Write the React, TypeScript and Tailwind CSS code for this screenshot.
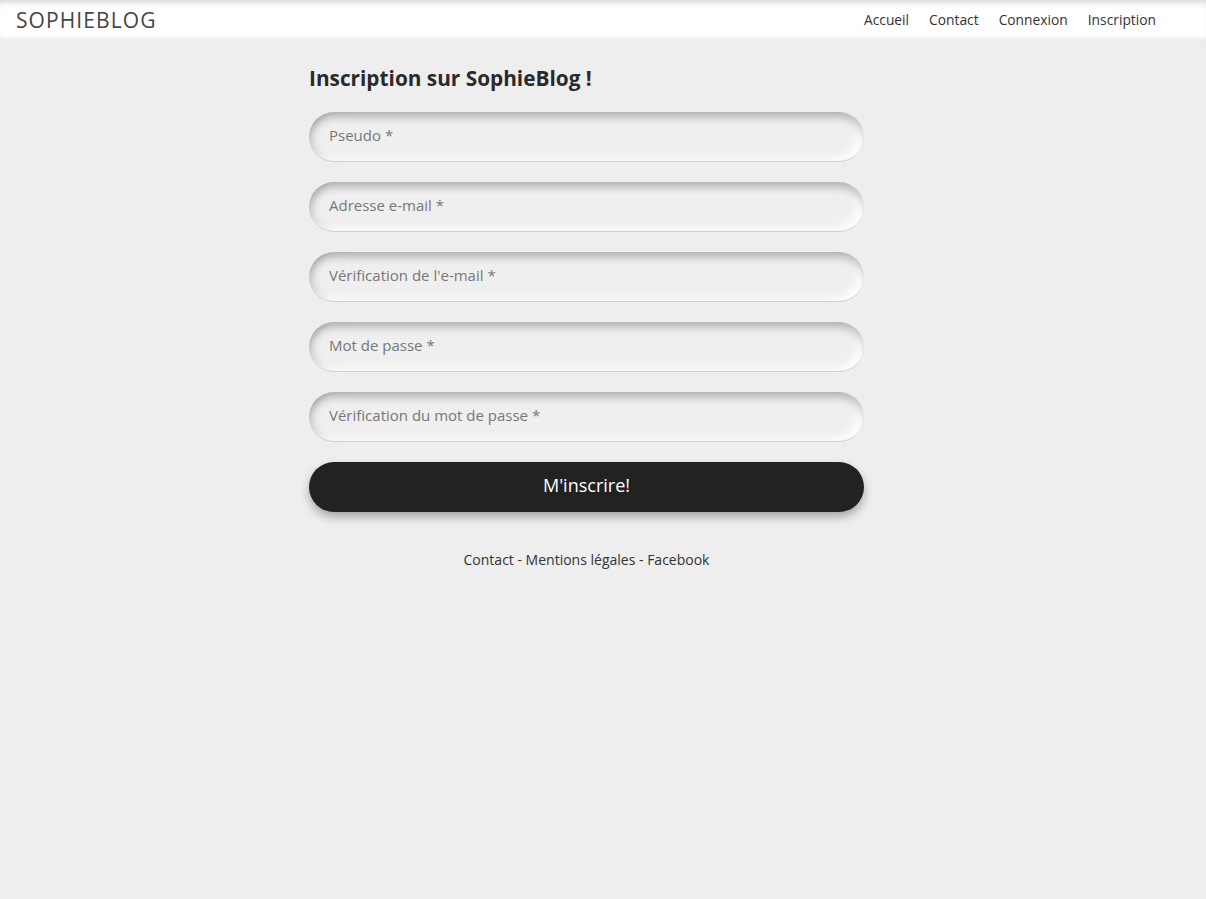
import React from "react";

const fields = [
  "Pseudo *",
  "Adresse e-mail *",
  "Vérification de l'e-mail *",
  "Mot de passe *",
  "Vérification du mot de passe *",
];

const App = () => {
  return (
    <div className="min-h-[899px] bg-[#eeeeee] text-[#333] font-['Open_Sans','Lato',sans-serif]">
      <header className="h-[42px] bg-white flex items-center justify-between pl-4 pr-[50px] pb-[1px] shadow-[inset_0_7px_7px_-5px_rgba(0,0,0,0.18),inset_0_-7px_7px_-5px_rgba(0,0,0,0.12)]">
        <a className="text-[21px] tracking-[1.1px] text-[#444] leading-none">SOPHIEBLOG</a>
        <nav className="flex gap-5 text-[13.8px] text-[#333]">
          <a>Accueil</a>
          <a>Contact</a>
          <a>Connexion</a>
          <a>Inscription</a>
        </nav>
      </header>

      <main className="flex justify-center pr-[33px]">
        <div className="w-[555px] pt-[22px]">
          <h1 className="text-[20.8px] font-bold text-[#2a2a2a] leading-[28px]">
            Inscription sur SophieBlog !
          </h1>
          {/* INFO: form fields */}
          <form className="mt-[20px] flex flex-col gap-5" onSubmit={(e) => e.preventDefault()}>
            {fields.map((label) => (
              <input
                key={label}
                type="text"
                placeholder={label}
                className="h-[50px] w-full rounded-full bg-[#efefef] px-5 pb-[3px] text-[15px] text-[#555] placeholder:text-[#777] outline-none border-b border-[#cfcfcf] shadow-[inset_0_8px_9px_-3px_rgba(0,0,0,0.25),inset_-8px_-5px_8px_-2px_rgba(255,255,255,0.9),inset_8px_0_8px_-4px_rgba(0,0,0,0.12)]"
              />
            ))}
            <button
              type="submit"
              className="h-[50px] w-full rounded-full bg-[#222] text-white text-[18px] pb-[3px] shadow-[0_5px_10px_rgba(0,0,0,0.3)]"
            >
              M'inscrire!
            </button>
          </form>
          <footer className="mt-[37px] text-center text-[14px] text-[#333]">
            <a>Contact</a> - <a>Mentions légales</a> - <a>Facebook</a>
          </footer>
        </div>
      </main>
    </div>
  );
};

export default App;
